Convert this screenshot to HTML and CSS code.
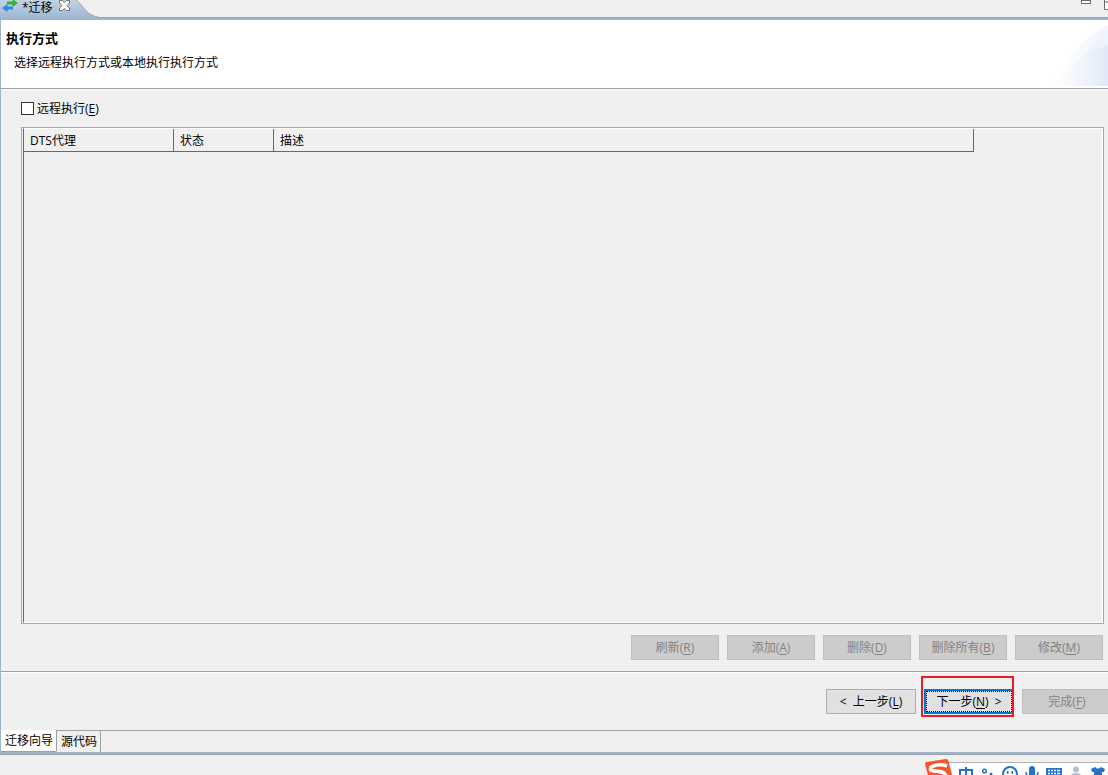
FILE: index.html
```html
<!DOCTYPE html>
<html lang="zh-CN">
<head>
<meta charset="utf-8">
<title>迁移</title>
<link rel="stylesheet" href="styles.css">
</head>
<body>
<div class="app">
  <header class="editor-tabs">
    <div class="editor-tab">
      <svg class="tab-shape" viewBox="0 0 104 20" aria-hidden="true">
        <defs><linearGradient id="tabfill" x1="0" y1="0" x2="0" y2="1"><stop offset="0" stop-color="#c3d2e4"/><stop offset="1" stop-color="#99b4d1"/></linearGradient></defs>
        <path d="M0 0H76C84 6 86 16 100 17.500H104V20H0Z" fill="url(#tabfill)"/>
        <path d="M76 0C84 6 86 16 100 17.500H104" fill="none" stroke="#a0a0a0"/>
      </svg>
      <svg class="swap-icon" viewBox="0 0 16 12" aria-hidden="true">
        <path d="M5 1.500h5.500V-1L16 3l-5.500 4V4.500H5z" fill="#2eb135"/>
        <path d="M11 9.500H5.500V12L0 8l5.500-4v2.500H11z" fill="#2d8ad6"/>
      </svg>
      <span class="tab-title">*迁移</span>
      <button class="tab-close" aria-label="关闭">
        <svg viewBox="0 0 11 11"><path d="M.5.500h3l2 2 2-2h3v2.500l-2.500 2.500 2.500 2.500v2.500h-3l-2-2-2 2h-3V8L3 5.500.5 3z" fill="#fff" stroke="#6d7379"/></svg>
      </button>
    </div>
    <svg class="window-icons" viewBox="0 0 28 10" aria-hidden="true">
      <path d="M1.500 -2V3.500H10.500V-2M1.500 .5H10.500" fill="#fff" stroke="#696969"/>
      <path d="M24.500 -2V9.500H30M24.500 2H30" fill="#fff" stroke="#696969"/>
    </svg>
  </header>

  <main class="wizard">
    <section class="banner">
      <h1>执行方式</h1>
      <p>选择远程执行方式或本地执行执行方式</p>
      <svg class="banner-art" viewBox="0 0 60 66" aria-hidden="true">
        <defs>
          <linearGradient id="arc" x1="0" y1="0" x2="1" y2="0"><stop offset="0" stop-color="#fff"/><stop offset=".5" stop-color="#f9fafe"/><stop offset="1" stop-color="#f0f4fc"/></linearGradient>
          <linearGradient id="arc2" x1="0" y1="0" x2="1" y2="0"><stop offset="0" stop-color="#fff"/><stop offset=".4" stop-color="#f5f8fd"/><stop offset="1" stop-color="#e0e8f7"/></linearGradient>
        </defs>
        <path d="M4 66C18 38 36 16 60 5V66Z" fill="url(#arc)"/>
        <path d="M38 35Q48 18 60 8V30Z" fill="#eff3fc"/>
        <path d="M4 66C20 46 36 32 60 25V66Z" fill="url(#arc2)"/>
      </svg>
    </section>

    <section class="content">
      <label class="remote"><input type="checkbox"><span>远程执行(<u>E</u>)</span></label>
      <div class="table-frame">
        <div class="table-body">
          <table>
            <thead><tr><th class="agent">DTS代理</th><th class="state">状态</th><th class="desc">描述</th></tr></thead>
          </table>
        </div>
      </div>
      <div class="actions">
        <button disabled>刷新(<u>R</u>)</button>
        <button disabled>添加(<u>A</u>)</button>
        <button disabled>删除(<u>D</u>)</button>
        <button disabled>删除所有(<u>B</u>)</button>
        <button disabled>修改(<u>M</u>)</button>
      </div>
    </section>

    <nav class="steps">
      <button>&lt;&nbsp; 上一步(<u>L</u>)</button>
      <div class="next-wrap">
        <button class="next">下一步(<u>N</u>)&nbsp; &gt;</button>
        <span class="highlight"></span>
      </div>
      <button disabled>完成(<u>F</u>)</button>
    </nav>

    <div class="page-tabs">
      <button class="active">迁移向导</button>
      <button>源代码</button>
    </div>
  </main>

  <footer class="status">
    <div class="ime">
      <svg class="ime-logo" viewBox="0 0 28 17" aria-hidden="true">
        <path d="M2.500 4 22 1Q24 1 24.500 3L28 17H4L1 6Q1 4.500 2.500 4Z" fill="#f0592b"/>
        <path d="M23 8C16 5.500 6 7.500 6.500 11.500C8 15 20 10.500 22 18" fill="none" stroke="#fff" stroke-width="3.500"/>
      </svg>
      <div class="ime-bar">
        <svg viewBox="0 0 160 12" aria-hidden="true">
          <g fill="none" stroke="#2374c6" stroke-width="2">
            <path d="M12 12V7H24V12M18 4V12"/>
            <circle cx="36.500" cy="8" r="1.800" stroke-width="1.500"/>
            <circle cx="62" cy="11" r="7"/>
            <path d="M78 9Q78 14 84 14Q90 14 90 9" stroke-width="1.500"/>
          </g>
          <g fill="#2374c6">
            <circle cx="43" cy="11" r="1.500"/>
            <path d="M59 8h1.500v3h-1.500zM63.500 8h1.500v3h-1.500zM81 6Q81 3 84 3T87 6V12H81zM98 5H114V12H98zM143 6L147 4Q150 7 153 4L157 6 156 9 154 9V12H146V9L144 9z"/>
          </g>
          <path d="M100 7.500h2m1 0h2m1 0h2m1 0h3M100 10.500h2m1 0h2m1 0h2m1 0h3" stroke="#fff" stroke-width="1.500"/>
          <g fill="#b4bfd2"><circle cx="128" cy="6.500" r="3"/><path d="M123 12Q124 10 128 10T133 12z"/></g>
        </svg>
      </div>
    </div>
  </footer>
</div>
</body>
</html>
```

FILE: styles.css
```css
* { box-sizing: border-box; }
body {
  margin: 0;
  background: #f0f0f0;
  color: #000;
  font: 12px/16px "Open Sans", "Noto Sans CJK SC", sans-serif;
}
button, input { font: inherit; color: inherit; margin: 0; }
button { padding: 0; white-space: nowrap; }
u { text-underline-offset: 2px; }

.app { display: flex; flex-direction: column; height: 100vh; overflow: hidden; }

.editor-tabs {
  display: flex;
  justify-content: space-between;
  height: 18px;
  border-bottom: 1px solid #a0a0a0;
  flex: none;
}
.editor-tab {
  position: relative;
  display: flex;
  align-items: flex-start;
  width: 104px;
  padding-left: 2px;
}
.tab-shape { position: absolute; left: 0; top: 0; width: 104px; height: 20px; }
.swap-icon { position: relative; width: 16px; height: 12px; }
.tab-title { position: relative; margin-left: 4px; line-height: 16px; }
.tab-close {
  position: relative;
  width: 11px;
  height: 11px;
  margin-left: 6px;
  border: 0;
  background: none;
}
.tab-close svg { display: block; width: 11px; height: 11px; }
.window-icons { width: 28px; height: 10px; }

.wizard {
  flex: 1;
  min-height: 0;
  display: flex;
  flex-direction: column;
  border: solid #99b4d1;
  border-width: 2px 0 2px 1px;
}
.banner {
  position: relative;
  flex: none;
  height: 69px;
  padding: 10px 5px 0;
  background: #fff;
  border-bottom: 1px solid #a0a0a0;
}
.banner h1 { margin: 0; font-size: 13px; line-height: 16px; }
.banner p { margin: 9px 0 0 8px; }
.banner-art { position: absolute; right: 0; top: 0; width: 60px; height: 66px; }

.content {
  flex: 1;
  min-height: 0;
  display: flex;
  flex-direction: column;
  padding: 10px 4px 11px 20px;
  border-top: 1px solid #fff;
  border-bottom: 1px solid #a0a0a0;
}
.remote { display: flex; align-items: flex-end; gap: 3px; align-self: flex-start; line-height: 18px; }
.remote input {
  appearance: none;
  width: 13px;
  height: 13px;
  margin-bottom: 3px;
  border: 1px solid #333;
  background: #fff;
}
.table-frame {
  flex: 1;
  min-height: 0;
  margin-top: 9px;
  border: 1px solid #a8a8a8;
}
.table-body {
  height: 100%;
  margin-left: 1px;
  border: 1px solid #fff;
  border-left-color: #696969;
}
table { border-collapse: separate; border-spacing: 0; table-layout: fixed; width: 950px; }
th {
  height: 23px;
  padding: 2px 0 0 6px;
  border: solid #696969;
  border-width: 0 1px 1px 0;
  text-align: left;
  font-weight: normal;
}
.agent { width: 150px; }
.state { width: 100px; }
.desc { width: 700px; }

.actions { display: flex; justify-content: flex-end; gap: 8px; margin: 11px 1px 0 0; }
.actions button, .steps button {
  width: 88px;
  height: 25px;
  background: #e1e1e1;
  border: 1px solid #adadad;
}
.actions button:disabled, .steps button:disabled {
  background: #ccc;
  border-color: #bfbfbf;
  color: #838383;
}

.steps {
  flex: none;
  display: flex;
  justify-content: flex-end;
  gap: 8px;
  padding: 16px 0;
  margin-right: -4px;
  border-top: 1px solid #fff;
}
.steps button { width: 90px; }
.next-wrap { position: relative; }
.steps .next { position: relative; border: 2px solid #0078d7; }
.next::after { content: ""; position: absolute; inset: 0; border: 1px dotted #000; }
.highlight {
  position: absolute;
  inset: -13px 0 -3px -3px;
  border: 2px solid #ed1c24;
  pointer-events: none;
}

.page-tabs { flex: none; display: flex; height: 22px; border-top: 1px solid #a0a0a0; }
.page-tabs button {
  padding: 0 3px 0 4px;
  border: 0;
  border-right: 1px solid #a0a0a0;
  background: none;
}
.page-tabs .active {
  margin-top: -1px;
  background: #fff;
  border-bottom: 1px solid #a0a0a0;
  border-bottom-right-radius: 2px;
}

.status {
  flex: none;
  display: flex;
  justify-content: flex-end;
  align-items: flex-end;
  height: 21px;
  border-top: 1px solid #a0a0a0;
}
.ime { display: flex; align-items: flex-end; }
.ime-logo { position: relative; width: 28px; height: 17px; margin-right: -4px; }
.ime-bar { height: 13px; border-top: 1px solid #b0b0b0; background: #fff; }
.ime-bar svg { display: block; width: 160px; height: 12px; }
```
